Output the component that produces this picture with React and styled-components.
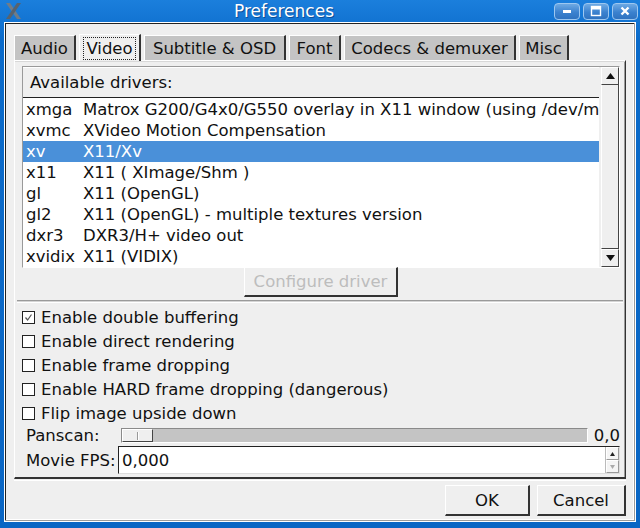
import React from "react";
import styled, { createGlobalStyle } from "styled-components";

const GlobalStyle = createGlobalStyle`
  html, body {
    margin: 0;
    padding: 0;
    width: 640px;
    height: 528px;
    overflow: hidden;
    background: #0b6bca;
  }
  * {
    box-sizing: border-box;
  }
`;

const tabs = [
  { name: "Audio", width: 62 },
  { name: "Video", width: 62, active: true },
  { name: "Subtitle & OSD", width: 142 },
  { name: "Font", width: 52 },
  { name: "Codecs & demuxer", width: 172 },
  { name: "Misc", width: 50 },
];

const drivers = [
  ["xmga", "Matrox G200/G4x0/G550 overlay in X11 window (using /dev/mga_vid)"],
  ["xvmc", "XVideo Motion Compensation"],
  ["xv", "X11/Xv"],
  ["x11", "X11 ( XImage/Shm )"],
  ["gl", "X11 (OpenGL)"],
  ["gl2", "X11 (OpenGL) - multiple textures version"],
  ["dxr3", "DXR3/H+ video out"],
  ["xvidix", "X11 (VIDIX)"],
];

const options = [
  { label: "Enable double buffering", checked: true },
  { label: "Enable direct rendering" },
  { label: "Enable frame dropping" },
  { label: "Enable HARD frame dropping (dangerous)" },
  { label: "Flip image upside down" },
];

function App() {
  return (
    <>
      <GlobalStyle />
      <Window>
        <TitleBar>
          <XLogo width="17" height="18" viewBox="0 0 17 18">
            <path d="M1 1 L5 1 L16 17 L12 17 Z" fill="#6f7c88" />
            <path d="M12 1 L16 1 L5 17 L1 17 Z" fill="#58636e" />
          </XLogo>
          <Title>Preferences</Title>
          <TitleButtons>
            <TitleButton>
              <svg width="12" height="12" viewBox="0 0 12 12">
                <rect x="2" y="5" width="8" height="3" fill="#fff" />
              </svg>
            </TitleButton>
            <TitleButton>
              <svg width="12" height="12" viewBox="0 0 12 12">
                <rect x="1.5" y="1.5" width="9" height="9" fill="none" stroke="#fff" strokeWidth="1.4" />
                <rect x="1.5" y="1.5" width="9" height="3" fill="#fff" />
              </svg>
            </TitleButton>
            <TitleButton>
              <svg width="12" height="12" viewBox="0 0 12 12">
                <path d="M2.5 2.5 L9.5 9.5 M9.5 2.5 L2.5 9.5" stroke="#fff" strokeWidth="2.4" />
              </svg>
            </TitleButton>
          </TitleButtons>
        </TitleBar>
        <Client>
          <Notebook>
            <TabRow>
              {tabs.map((t) => (
                <Tab key={t.name} $width={t.width} $active={t.active}>
                  <TabLabel $active={t.active}>{t.name}</TabLabel>
                </Tab>
              ))}
            </TabRow>
            <Panel>
              <ListBox>
                <ListMain>
                  <ListHeader>Available drivers:</ListHeader>
                  <Rows>
                    {drivers.map(([key, desc]) => (
                      <Row key={key} $selected={key === "xv"}>
                        <KeyCol>{key}</KeyCol>
                        <DescCol>{desc}</DescCol>
                      </Row>
                    ))}
                  </Rows>
                </ListMain>
                <ScrollBar>
                  <ScrollArrow>
                    <svg width="9" height="6" viewBox="0 0 9 6">
                      <path d="M0 6 L4.5 0 L9 6 Z" fill="#111" />
                    </svg>
                  </ScrollArrow>
                  <ScrollTrough />
                  <ScrollArrow>
                    <svg width="9" height="6" viewBox="0 0 9 6">
                      <path d="M0 0 L4.5 6 L9 0 Z" fill="#111" />
                    </svg>
                  </ScrollArrow>
                </ScrollBar>
              </ListBox>
              <ButtonRow>
                <ConfigButton disabled>Configure driver</ConfigButton>
              </ButtonRow>
              <Separator />
              <Options>
                {options.map((o) => (
                  <CheckRow key={o.label}>
                    <CheckBox>
                      {o.checked && (
                        <svg width="11" height="11" viewBox="0 0 11 11">
                          <path d="M2.5 5.5 L4.6 8 L8.5 2.5" fill="none" stroke="#555" strokeWidth="1.2" />
                        </svg>
                      )}
                    </CheckBox>
                    <CheckLabel>{o.label}</CheckLabel>
                  </CheckRow>
                ))}
              </Options>
              <FieldRow $height={21}>
                <FieldLabel>Panscan:</FieldLabel>
                <SliderTrough>
                  <SliderThumb />
                </SliderTrough>
                <SliderValue>0,0</SliderValue>
              </FieldRow>
              <FieldRow $height={28}>
                <FieldLabel $width={96}>Movie FPS:</FieldLabel>
                <SpinInput>
                  <SpinText>0,000</SpinText>
                  <SpinButtons>
                    <SpinArrow>
                      <svg width="5" height="4" viewBox="0 0 5 4">
                        <path d="M0 4 L2.5 0 L5 4 Z" fill="#222" />
                      </svg>
                    </SpinArrow>
                    <SpinArrow>
                      <svg width="5" height="4" viewBox="0 0 5 4">
                        <path d="M0 0 L2.5 4 L5 0 Z" fill="#aaa" />
                      </svg>
                    </SpinArrow>
                  </SpinButtons>
                </SpinInput>
              </FieldRow>
            </Panel>
          </Notebook>
          <Footer>
            <DialogButton $width={85}>OK</DialogButton>
            <DialogButton $width={89}>Cancel</DialogButton>
          </Footer>
        </Client>
      </Window>
    </>
  );
}

export default App;

const Window = styled.div`
  width: 640px;
  height: 528px;
  display: flex;
  flex-direction: column;
  padding: 0 4px 6px 4px;
  background: linear-gradient(#1b7fdc, #0b6bca 40px, #0a66c4);
  font-family: "DejaVu Sans", "Liberation Sans", sans-serif;
  font-size: 16.5px;
  color: #111;
`;

const TitleBar = styled.div`
  height: 22px;
  display: flex;
  align-items: center;
  padding-left: 1px;
`;

const XLogo = styled.svg`
  flex-shrink: 0;
`;

const Title = styled.div`
  flex: 1;
  text-align: center;
  color: #fff;
  font-size: 17px;
  text-shadow: 1px 1px 0 #0a4f99;
  padding-right: 8px;
`;

const TitleButtons = styled.div`
  display: flex;
  gap: 3px;
  margin-right: -2px;
`;

const TitleButton = styled.div`
  width: 26px;
  height: 17px;
  border-radius: 4px;
  border: 1px solid #9cc7f0;
  background: linear-gradient(#6ea9e3, #3b82cf 55%, #2f73c0);
  display: flex;
  align-items: center;
  justify-content: center;
`;

const Client = styled.div`
  flex: 1;
  display: flex;
  flex-direction: column;
  background: #efefef;
  border: 1px solid #fff;
  box-shadow: inset -1px -1px 0 #9a9a9a, inset 1px 1px 0 #222, inset -2px -2px 0 #fff;
  padding: 10px 9px 0 9px;
`;

const Notebook = styled.div`
  display: flex;
  flex-direction: column;
`;

const TabRow = styled.div`
  display: flex;
  gap: 3px;
  height: 27px;
  align-items: flex-end;
`;

const Tab = styled.div`
  width: ${(p) => p.$width}px;
  height: ${(p) => (p.$active ? 27 : 25)}px;
  background: ${(p) => (p.$active ? "#efefef" : "#c4c4c4")};
  border-top: 1px solid #fff;
  border-left: 1px solid #fff;
  border-right: 2px solid #333;
  display: flex;
  align-items: center;
  justify-content: center;
  margin-bottom: ${(p) => (p.$active ? "-1px" : "0")};
  position: relative;
  z-index: ${(p) => (p.$active ? 1 : 0)};
`;

const TabLabel = styled.span`
  padding: 0 2px;
  line-height: 21px;
  white-space: nowrap;
  border: 1px dotted ${(p) => (p.$active ? "#222" : "transparent")};
`;

const Panel = styled.div`
  border-top: 1px solid #fff;
  border-left: 1px solid #fff;
  border-right: 1px solid #333;
  border-bottom: 2px solid #333;
  box-shadow: inset 0 1px 0 #d8d8d8, inset -1px 0 0 #9a9a9a;
  padding: 5px 5px 3px 7px;
  display: flex;
  flex-direction: column;
`;

const ListBox = styled.div`
  height: 202px;
  display: flex;
  border: 1px solid #9a9a9a;
  border-right-color: #fff;
  border-bottom-color: #fff;
  background: #efefef;
`;

const ListMain = styled.div`
  flex: 1;
  display: flex;
  flex-direction: column;
  min-width: 0;
`;

const ListHeader = styled.div`
  height: 31px;
  flex-shrink: 0;
  display: flex;
  align-items: center;
  padding-left: 7px;
  border-top: 1px solid #fff;
  border-bottom: 1px solid #222;
  background: #efefef;
`;

const Rows = styled.div`
  flex: 1;
  background: #fff;
  padding-top: 1px;
  overflow: hidden;
`;

const Row = styled.div`
  height: 21px;
  display: flex;
  align-items: center;
  white-space: nowrap;
  overflow: hidden;
  background: ${(p) => (p.$selected ? "#4a90d9" : "transparent")};
  color: ${(p) => (p.$selected ? "#fff" : "#111")};
`;

const KeyCol = styled.span`
  width: 60px;
  padding-left: 3px;
  flex-shrink: 0;
`;

const DescCol = styled.span`
  flex-shrink: 0;
`;

const ScrollBar = styled.div`
  width: 18px;
  flex-shrink: 0;
  display: flex;
  flex-direction: column;
  margin-left: 2px;
  background: #e6e6e6;
`;

const ScrollArrow = styled.div`
  height: 18px;
  display: flex;
  align-items: center;
  justify-content: center;
  background: #efefef;
  border: 1px solid #fff;
  border-right-color: #444;
  border-bottom-color: #444;
`;

const ScrollTrough = styled.div`
  flex: 1;
  background: #efefef;
  border-left: 1px solid #fff;
  border-right: 1px solid #444;
  border-bottom: 1px solid #444;
`;

const ButtonRow = styled.div`
  display: flex;
  justify-content: center;
  margin-top: -1px;
`;

const ConfigButton = styled.button`
  width: 154px;
  height: 30px;
  font-family: inherit;
  font-size: 16.5px;
  color: #bdbdbd;
  background: #efefef;
  border: 1px solid #fff;
  border-right: 2px solid #333;
  border-bottom: 2px solid #333;
  padding: 0;
`;

const Separator = styled.div`
  margin: 3px -3px 0 -5px;
  height: 3px;
  border-top: 1px solid #9a9a9a;
  border-bottom: 1px solid #fff;
  background: #d4d4d4;
`;

const Options = styled.div`
  display: flex;
  flex-direction: column;
  padding-top: 2px;
`;

const CheckRow = styled.div`
  height: 24px;
  display: flex;
  align-items: center;
`;

const CheckBox = styled.span`
  width: 13px;
  height: 13px;
  border: 1px solid #222;
  background: #fff;
  display: flex;
  align-items: center;
  justify-content: center;
  margin-right: 6px;
  flex-shrink: 0;
`;

const CheckLabel = styled.span`
  white-space: nowrap;
`;

const FieldRow = styled.div`
  height: ${(p) => p.$height}px;
  display: flex;
  align-items: center;
`;

const FieldLabel = styled.span`
  width: ${(p) => p.$width || 99}px;
  padding-left: 4px;
  flex-shrink: 0;
  white-space: nowrap;
`;

const SliderTrough = styled.div`
  flex: 1;
  height: 15px;
  background: #c4c4c4;
  border: 1px solid #8a8a8a;
  border-right-color: #fff;
  border-bottom-color: #fff;
  position: relative;
`;

const SliderThumb = styled.div`
  position: absolute;
  left: 0;
  top: 0;
  width: 31px;
  height: 13px;
  background: #efefef;
  border-top: 1px solid #fff;
  border-left: 1px solid #fff;
  border-right: 1px solid #444;
  border-bottom: 1px solid #444;
  &::after {
    content: "";
    position: absolute;
    left: 14px;
    top: 2px;
    width: 1px;
    height: 8px;
    background: #999;
    box-shadow: 1px 0 0 #fff;
  }
`;

const SliderValue = styled.span`
  width: 32px;
  text-align: right;
  flex-shrink: 0;
`;

const SpinInput = styled.div`
  flex: 1;
  height: 28px;
  display: flex;
  background: #fff;
  border: 1px solid #222;
  border-right-color: #ddd;
  border-bottom-color: #ddd;
`;

const SpinText = styled.span`
  flex: 1;
  padding-left: 3px;
  display: flex;
  align-items: center;
`;

const SpinButtons = styled.div`
  width: 14px;
  display: flex;
  flex-direction: column;
  border-left: 1px solid #bbb;
`;

const SpinArrow = styled.div`
  flex: 1;
  display: flex;
  align-items: center;
  justify-content: center;
  background: #f4f4f4;
  border: 1px solid #fff;
  border-right-color: #999;
  border-bottom-color: #999;
`;

const Footer = styled.div`
  flex: 1;
  display: flex;
  justify-content: flex-end;
  align-items: flex-start;
  gap: 7px;
  padding: 4px 0 0 0;
  margin-top: 1px;
  border-top: 1px solid #fff;
`;

const DialogButton = styled.button`
  width: ${(p) => p.$width}px;
  height: 31px;
  font-family: inherit;
  font-size: 16.5px;
  color: #111;
  background: #efefef;
  border: 1px solid #fff;
  border-right: 2px solid #333;
  border-bottom: 2px solid #333;
  padding: 0;
`;
